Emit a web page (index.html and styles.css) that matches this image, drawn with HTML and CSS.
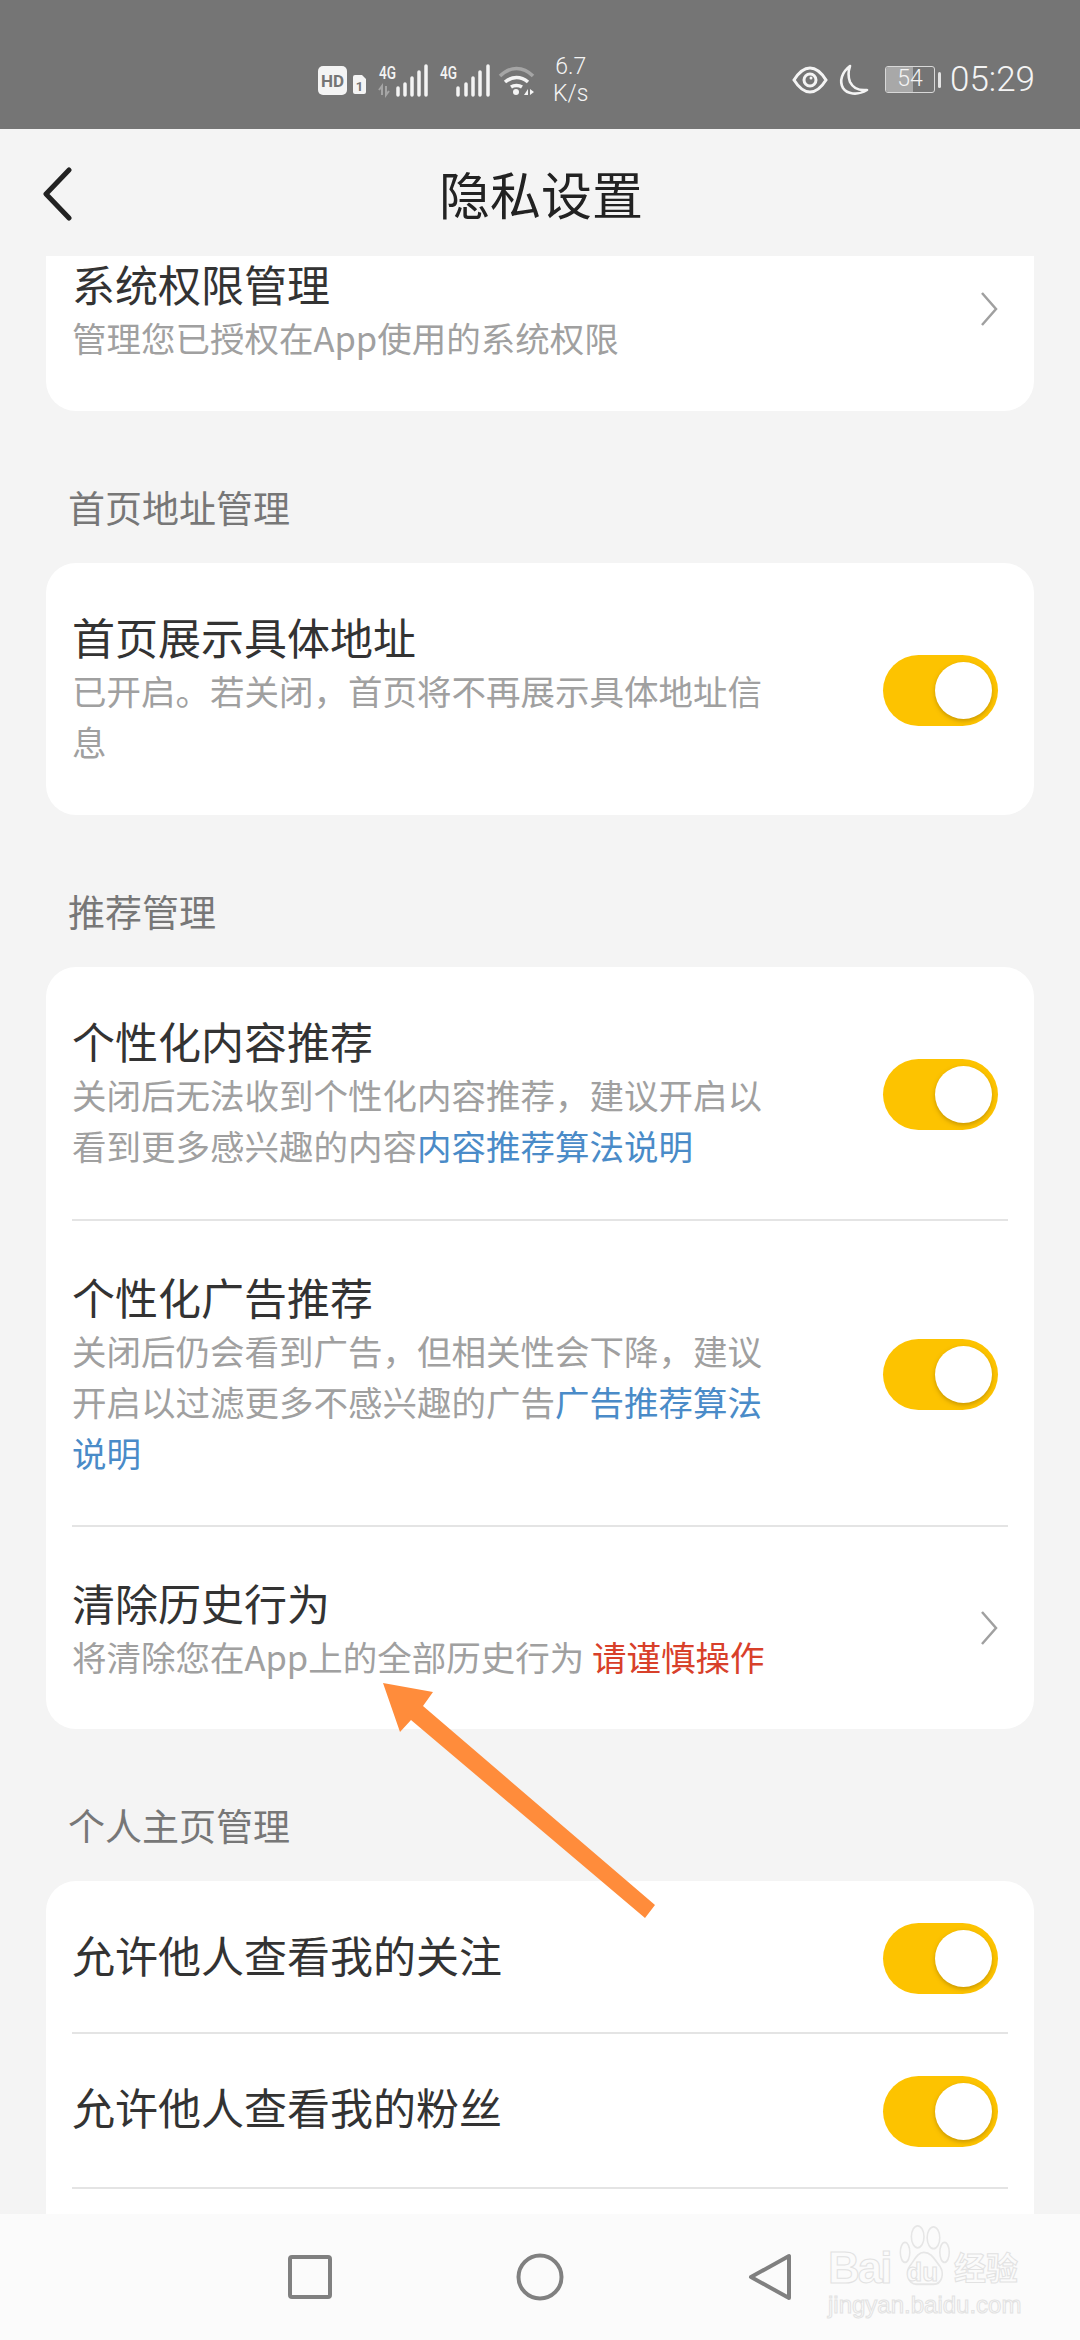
FILE: index.html
```html
<!DOCTYPE html>
<html lang="zh-CN">
<head>
    <meta charset="UTF-8">
    <meta name="viewport" content="width=device-width, initial-scale=1.0">
    <title>隐私设置</title>
    <link rel="stylesheet" href="styles.css">
</head>
<body>
<div class="pagina">

    <!-- Status bar -->
    <div class="estado">
        <svg class="estado-izq" width="220" height="40" viewBox="318 58 220 40">
            <rect x="318" y="64" width="29" height="29" rx="5" fill="#f4f4f4"/>
            <text x="332.500" y="85" class="t-hd" text-anchor="middle">HD</text>
            <path d="M355 73h7l4 4v13a2 2 0 0 1-2 2h-9a2 2 0 0 1-2-2V75a2 2 0 0 1 2-2z" fill="#f4f4f4"/>
            <text x="359.500" y="89" class="t-sim" text-anchor="middle">1</text>
            <text x="379" y="77" class="t-4g" textLength="17" lengthAdjust="spacingAndGlyphs">4G</text>
            <path d="M382 93v-9l-3 4M386 84v9l3-4" fill="none" stroke="#a5a5a5" stroke-width="2"/>
            <path d="M398 93v-7M405 93v-11M412 93v-17M419 93v-23M426 93v-29" class="barras"/>
            <text x="440" y="77" class="t-4g" textLength="17" lengthAdjust="spacingAndGlyphs">4G</text>
            <path d="M458 93v-7M466 93v-11M473 93v-17M480 93v-23M488 93v-29" class="barras"/>
            <path d="M500 74c10-10 23-10 33 0" class="wifi wifi-tenue"/>
            <path d="M505 80c7-6 16-6 23 0M511 85c3-2 8-2 11 0" class="wifi"/>
            <circle cx="516" cy="90" r="3" fill="#f4f4f4"/>
            <path d="M524 93l4-6v6zM530 87v6l4-3z" fill="#f4f4f4"/>
        </svg>
        <div class="velocidad">6.7<br>K/s</div>
        <div class="espacio"></div>
        <svg class="ojo" width="36" height="28" viewBox="0 0 36 28">
            <path d="M2 14C7 6 12 2 18 2s11 4 16 12c-5 8-10 12-16 12S7 22 2 14z" fill="none" stroke="#f4f4f4" stroke-width="3"/>
            <circle cx="18" cy="14" r="6" fill="none" stroke="#f4f4f4" stroke-width="3"/>
            <circle cx="19" cy="12" r="1.500" fill="#f4f4f4"/>
        </svg>
        <svg class="luna" width="32" height="32" viewBox="0 0 32 32">
            <path d="M12 2C4 8 1 17 5 24c4 6 14 8 24 2-9 1-14-2-17-8-2-5-2-10 0-16z" fill="none" stroke="#f4f4f4" stroke-width="2.600" stroke-linejoin="round"/>
        </svg>
        <div class="bateria">
            <div class="bateria-nivel"></div>
            <span class="bateria-num">54</span>
        </div>
        <div class="bateria-punta"></div>
        <div class="hora">05:29</div>
    </div>

    <!-- Title bar -->
    <div class="cabecera">
        <svg class="volver" width="32" height="54" viewBox="0 0 32 54">
            <path d="M28 3L5 27l23 24" fill="none" stroke="#222" stroke-width="5" stroke-linecap="round" stroke-linejoin="round"/>
        </svg>
        <h1>隐私设置</h1>
    </div>

    <div class="contenido">
        <div class="lista">
            <div class="tarjeta">
                <div class="fila">
                    <div class="textos">
                        <div class="titulo">系统权限管理</div>
                        <div class="sub">管理您已授权在App使用的系统权限</div>
                    </div>
                    <svg class="flecha" width="18" height="34" viewBox="0 0 18 34"><path d="M2 1l14 16L2 33" fill="none" stroke="#a0a0a0" stroke-width="2.500"/></svg>
                </div>
            </div>

            <div class="seccion">首页地址管理</div>
            <div class="tarjeta">
                <div class="fila">
                    <div class="textos">
                        <div class="titulo">首页展示具体地址</div>
                        <div class="sub">已开启。若关闭，首页将不再展示具体地址信息</div>
                    </div>
                    <div class="interruptor"><div class="perilla"></div></div>
                </div>
            </div>

            <div class="seccion">推荐管理</div>
            <div class="tarjeta">
                <div class="fila">
                    <div class="textos">
                        <div class="titulo">个性化内容推荐</div>
                        <div class="sub">关闭后无法收到个性化内容推荐，建议开启以看到更多感兴趣的内容<span class="enlace">内容推荐算法说明</span></div>
                    </div>
                    <div class="interruptor"><div class="perilla"></div></div>
                </div>
                <div class="fila">
                    <div class="textos">
                        <div class="titulo">个性化广告推荐</div>
                        <div class="sub">关闭后仍会看到广告，但相关性会下降，建议开启以过滤更多不感兴趣的广告<span class="enlace">广告推荐算法说明</span></div>
                    </div>
                    <div class="interruptor"><div class="perilla"></div></div>
                </div>
                <div class="fila">
                    <div class="textos">
                        <div class="titulo">清除历史行为</div>
                        <div class="sub">将清除您在App上的全部历史行为 <span class="aviso">请谨慎操作</span></div>
                    </div>
                    <svg class="flecha" width="18" height="34" viewBox="0 0 18 34"><path d="M2 1l14 16L2 33" fill="none" stroke="#a0a0a0" stroke-width="2.500"/></svg>
                </div>
            </div>

            <div class="seccion">个人主页管理</div>
            <div class="tarjeta">
                <div class="fila fila-simple">
                    <div class="textos"><div class="titulo">允许他人查看我的关注</div></div>
                    <div class="interruptor"><div class="perilla"></div></div>
                </div>
                <div class="fila fila-simple">
                    <div class="textos"><div class="titulo">允许他人查看我的粉丝</div></div>
                    <div class="interruptor"><div class="perilla"></div></div>
                </div>
                <div class="fila fila-simple"></div>
            </div>
        </div>
    </div>

    <!-- Navigation buttons -->
    <div class="navegacion">
        <svg width="60" height="60" viewBox="0 0 60 60"><rect x="10" y="10" width="40" height="40" rx="2" fill="none" stroke="#808080" stroke-width="4"/></svg>
        <svg width="60" height="60" viewBox="0 0 60 60"><circle cx="30" cy="30" r="21.500" fill="none" stroke="#808080" stroke-width="4"/></svg>
        <svg width="60" height="60" viewBox="0 0 60 60"><path d="M49 9v42L11 30z" fill="none" stroke="#808080" stroke-width="4" stroke-linejoin="round"/></svg>
    </div>

    <!-- Watermark -->
    <div class="marca">
        <svg class="marca-pata" width="60" height="62" viewBox="0 0 76 68" preserveAspectRatio="none">
            <g fill="none" stroke="#e6e6e6" stroke-width="2">
                <ellipse cx="30" cy="13" rx="8" ry="12"/>
                <ellipse cx="50" cy="14" rx="8" ry="12"/>
                <ellipse cx="14" cy="30" rx="6" ry="11"/>
                <ellipse cx="64" cy="30" rx="6" ry="11"/>
                <path d="M38 30c-9 0-12 9-18 15-6 7-2 20 8 20h22c11 0 14-12 8-20-6-6-10-15-20-15z"/>
            </g>
        </svg>
        <div class="marca-fila"><span class="marca-bai">Bai</span><span class="marca-du">du</span><span class="marca-jy">经验</span></div>
        <div class="marca-web">jingyan.baidu.com</div>
    </div>

    <!-- Annotation arrow -->
    <svg class="anotacion" width="280" height="242" viewBox="380 1680 280 242">
        <path d="M383 1683l50 9-10 14 232 199-10 13-234-198-11 12z" fill="#ff8c3b"/>
    </svg>
</div>
</body>
</html>
```

FILE: styles.css
```css
* {
    box-sizing: border-box;
}
body {
    margin: 0;
    font-family: "Noto Sans CJK SC", "Noto Sans", sans-serif;
    background-color: #f4f4f4;
}
.pagina {
    position: relative;
    display: flex;
    flex-direction: column;
    width: 1080px;
    height: 2340px;
    overflow: hidden;
}

/* Status bar */
.estado {
    display: flex;
    align-items: center;
    flex: none;
    height: 129px;
    padding: 30px 45px 0 318px;
    background-color: #757575;
    color: #f4f4f4;
    font-family: Roboto, sans-serif;
    font-weight: 300;
}
.estado-izq {
    flex: none;
}
.t-hd {
    font-family: Roboto, sans-serif;
    font-size: 17px;
    font-weight: 700;
    fill: #757575;
}
.t-sim {
    font-family: Roboto, sans-serif;
    font-size: 13px;
    font-weight: 700;
    fill: #757575;
}
.t-4g {
    font-family: Roboto, sans-serif;
    font-size: 19px;
    font-weight: 500;
    fill: #f4f4f4;
}
.barras {
    fill: none;
    stroke: #f4f4f4;
    stroke-width: 3.500;
    stroke-linecap: round;
}
.wifi {
    fill: none;
    stroke: #f4f4f4;
    stroke-width: 3.500;
}
.wifi-tenue {
    stroke: #a5a5a5;
}
.velocidad {
    margin-left: 15px;
    font-size: 23px;
    line-height: 27px;
    text-align: center;
}
.espacio {
    flex: 1;
}
.ojo {
    margin-right: 10px;
}
.luna {
    margin-right: 15px;
}
.bateria {
    position: relative;
    width: 50px;
    height: 27px;
    border: 1.500px solid #d8d8d8;
    border-radius: 3px;
    overflow: hidden;
}
.bateria-nivel {
    width: 27px;
    height: 100%;
    background-color: #a8a8a8;
}
.bateria-num {
    position: absolute;
    top: 0;
    left: 0;
    width: 100%;
    font-size: 23px;
    line-height: 24px;
    text-align: center;
}
.bateria-punta {
    width: 3px;
    height: 16px;
    margin: 0 9px 0 3px;
    border-radius: 2px;
    background-color: #e4e4e4;
}
.hora {
    font-size: 35px;
}

/* Title bar */
.cabecera {
    position: relative;
    display: flex;
    align-items: center;
    justify-content: center;
    flex: none;
    height: 127px;
}
.cabecera h1 {
    margin: 0 0 0 2px;
    font-size: 51px;
    font-weight: 400;
    color: #222;
}
.volver {
    position: absolute;
    left: 41px;
    top: 38px;
}

/* List */
.contenido {
    flex: 1;
    min-height: 0;
    overflow: hidden;
}
.lista {
    margin-top: -46px;
    padding: 0 46px;
}
.tarjeta {
    padding: 0 26px;
    border-radius: 30px;
    background-color: #fff;
}
.seccion {
    margin: 71px 0 31px 22px;
    font-size: 37px;
    line-height: 50px;
    color: #777;
}
.fila {
    display: flex;
    align-items: center;
    justify-content: space-between;
    padding: 46px 10px 47px 0;
    border-top: 2px solid #e4e4e4;
}
.fila:first-child {
    padding-top: 44px;
    padding-bottom: 48px;
    border-top: none;
}
.interruptor {
    position: relative;
    flex: none;
    width: 115px;
    height: 71px;
    margin-top: 3px;
    border-radius: 36px;
    background-color: #fdc300;
}
.fila:first-child .interruptor {
    margin-top: 7px;
}
.fila-simple {
    height: 155px;
    padding: 0 10px 0 0;
}
.fila-simple .textos {
    margin-bottom: 9px;
}
.fila-simple .interruptor {
    margin-top: 2px;
}
.fila-simple:first-child {
    height: 151px;
    padding-top: 4px;
    padding-bottom: 0;
}
.fila-simple:first-child .interruptor {
    margin-top: 0;
}
.textos {
    width: 696px;
}
.titulo {
    font-size: 43px;
    line-height: 58px;
    color: #333;
}
.sub {
    font-size: 34.500px;
    line-height: 51px;
    color: #a0a0a0;
}
.enlace {
    color: #4a8bc8;
}
.aviso {
    color: #d8402a;
}
.flecha {
    flex: none;
}
.perilla {
    position: absolute;
    top: 7px;
    right: 6px;
    width: 57px;
    height: 57px;
    border-radius: 50%;
    background-color: #fff;
    box-shadow: 0 2px 4px rgba(150, 110, 0, 0.5);
}

/* Bottom buttons */
.navegacion {
    display: flex;
    align-items: center;
    justify-content: center;
    gap: 170px;
    flex: none;
    height: 126px;
    background-color: #fbfbfb;
}

/* Watermark */
.marca {
    position: absolute;
    left: 828px;
    top: 2225px;
    width: 192px;
    height: 92px;
    color: #fbfbfb;
    font-family: "Liberation Sans", "Noto Sans CJK SC", sans-serif;
    -webkit-text-stroke: 1px #e2e2e2;
}
.marca-pata {
    position: absolute;
    left: 66px;
    top: 0;
}
.marca-fila {
    position: absolute;
    left: 0;
    top: 22px;
    display: flex;
    align-items: flex-end;
    justify-content: space-between;
    width: 190px;
    height: 42px;
    white-space: nowrap;
    font-weight: 700;
}
.marca-bai {
    font-size: 44px;
    line-height: 42px;
    letter-spacing: -2px;
}
.marca-du {
    font-size: 26px;
    line-height: 34px;
}
.marca-jy {
    font-size: 32px;
    line-height: 40px;
}
.marca-web {
    position: absolute;
    left: 0;
    top: 67px;
    white-space: nowrap;
    font-size: 24px;
    line-height: 26px;
}

/* Annotation */
.anotacion {
    position: absolute;
    left: 380px;
    top: 1680px;
}
```
